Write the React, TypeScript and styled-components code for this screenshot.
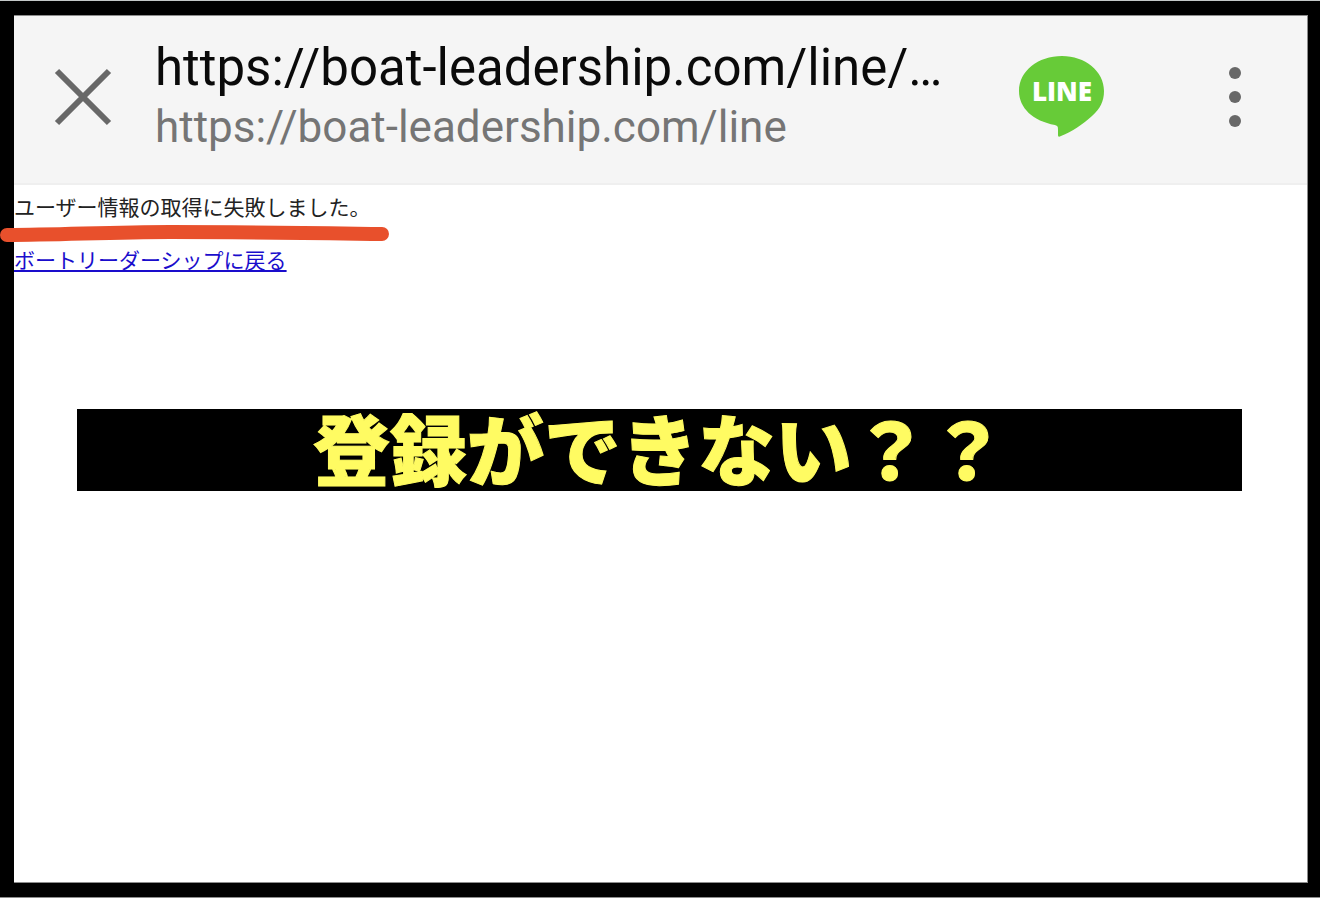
import React from "react";
import styled, { createGlobalStyle } from "styled-components";

const GlobalStyle = createGlobalStyle`
  * { box-sizing: border-box; }
  body { margin: 0; background: #000; }
`;

const Frame = styled.div`
  min-height: 100vh;
  display: flex;
  flex-direction: column;
  border-top: 1px solid #c4c8c8;
  border-bottom: 1px solid #8c8c8c;
  padding: 14px 12px 14px 14px;
  background: #000;
`;

const Screen = styled.div`
  flex: 1;
  display: flex;
  flex-direction: column;
  border: 1px solid #8c8c8c;
  border-left-width: 0;
  background: #fff;
`;

const TopBar = styled.header`
  height: 169px;
  display: flex;
  align-items: center;
  padding: 0 56px 6px 40px;
  background: #f5f5f5;
  border-bottom: 2px solid #efefef;
`;

const IconButton = styled.button`
  display: flex;
  padding: 0;
  border: 0;
  background: none;
`;

const Address = styled.div`
  flex: 1;
  min-width: 0;
  margin-left: 43px;
  font-family: Roboto, sans-serif;
  white-space: nowrap;
`;

const Title = styled.h1`
  margin: 0;
  font-size: 51px;
  line-height: 60px;
  font-weight: 400;
  color: #0a0a0a;
`;

const Url = styled.p`
  margin: 0;
  font-size: 44px;
  line-height: 58px;
  color: #757575;
`;

const Actions = styled.div`
  display: flex;
  align-items: center;
  gap: 114px;
`;

const Content = styled.main`
  flex: 1;
  font-family: "Noto Sans CJK JP", sans-serif;
`;

const Message = styled.p`
  margin: 0;
  padding-top: 5px;
  font-size: 21px;
  line-height: 32px;
  color: #222;
`;

const Underline = styled.svg`
  display: block;
  margin: 3px 0 0 -14px;
`;

const BackLink = styled.a`
  display: block;
  width: max-content;
  font-size: 21px;
  line-height: 32px;
  color: #1a0dcc;
`;

const Banner = styled.h2`
  height: 82px;
  margin: 134px 65px 0 63px;
  background: #000;
  color: #fffb62;
  text-align: center;
  font-size: 77px;
  line-height: 76px;
  font-weight: 900;
  -webkit-text-stroke: 1px #fffb62;
`;

const LogoText = styled.text`
  font: 800 26px "Open Sans", sans-serif;
`;

export default function App() {
  return (
    <>
      <GlobalStyle />
      <Frame>
        <Screen>
          <TopBar>
            <IconButton aria-label="Close">
              <svg width="58" height="58" viewBox="0 0 58 58" fill="none" stroke="#686868" strokeWidth="6">
                <path d="M3 3L55 55M55 3L3 55" />
              </svg>
            </IconButton>
            <Address>
              <Title>https://boat-leadership.com/line/…</Title>
              <Url>https://boat-leadership.com/line</Url>
            </Address>
            <Actions>
              <IconButton aria-label="LINE">
                <svg width="86" height="82" viewBox="0 0 86 82">
                  <path fill="#67cb38" d="M43 0C19 0 0 15 0 35c0 17 14 30 36 34 3 1 3 2 3 5v5c0 2 1 2 3 1 11-4 22-12 31-20 8-7 12-15 12-25C85 15 66 0 43 0Z" />
                  <LogoText x="43" y="45" textAnchor="middle" fill="#fff">LINE</LogoText>
                </svg>
              </IconButton>
              <IconButton aria-label="More options">
                <svg width="32" height="62" viewBox="0 0 32 62" fill="#686868">
                  <circle cx="16" cy="7" r="6" />
                  <circle cx="16" cy="31" r="6" />
                  <circle cx="16" cy="55" r="6" />
                </svg>
              </IconButton>
            </Actions>
          </TopBar>
          <Content>
            <Message>ユーザー情報の取得に失敗しました。</Message>
            <Underline width="390" height="18" viewBox="0 0 390 18" fill="none" stroke="#e8502c" strokeWidth="14" strokeLinecap="round">
              <path d="M7 10C60 10 110 7 170 7C250 7 310 8 382 9" />
            </Underline>
            <BackLink href="#">ボートリーダーシップに戻る</BackLink>
            <Banner>登録ができない？？</Banner>
          </Content>
        </Screen>
      </Frame>
    </>
  );
}
